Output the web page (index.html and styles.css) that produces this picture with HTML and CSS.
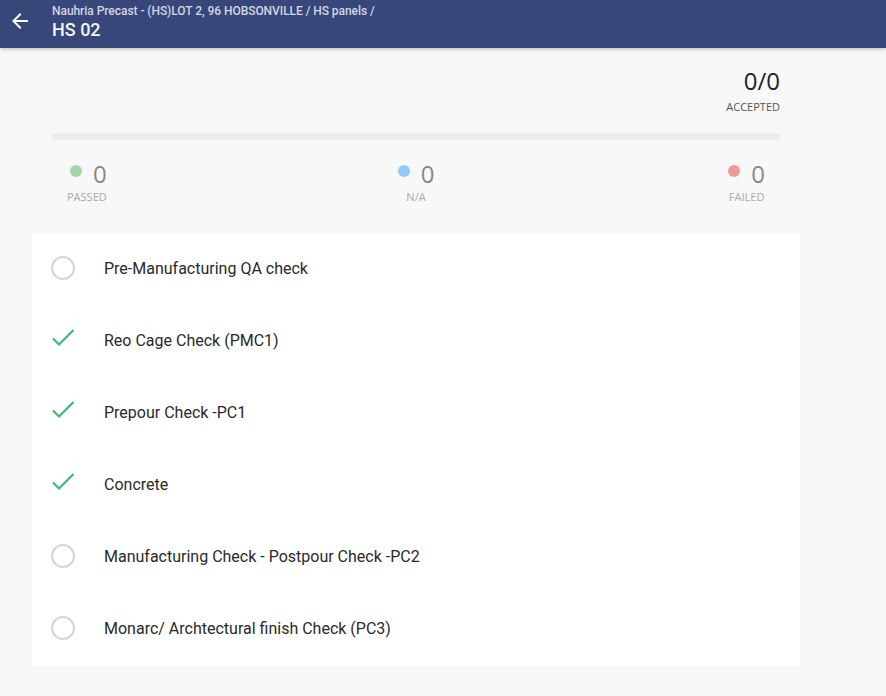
FILE: index.html
```html
<!DOCTYPE html>
<html lang="en">
<head>
<meta charset="utf-8">
<title>HS 02</title>
<link rel="stylesheet" href="styles.css">
</head>
<body>
<header class="topbar">
  <button class="back" aria-label="Back">
    <svg width="24" height="24" viewBox="0 0 24 24"><path d="M20 11H7.83l5.59-5.59L12 4l-8 8 8 8 1.41-1.41L7.83 13H20v-2z" fill="#ffffff"/></svg>
  </button>
  <div class="titles">
    <div class="crumb">Nauhria Precast - (HS)LOT 2, 96 HOBSONVILLE / HS panels /</div>
    <div class="title">HS 02</div>
  </div>
</header>
<main class="page">
  <section class="summary">
    <div class="accepted">
      <div class="big">0/0</div>
      <div class="label">ACCEPTED</div>
    </div>
    <div class="bar"></div>
    <div class="stats">
      <div class="stat start">
        <div class="stat-row"><span class="dot green"></span><span class="num">0</span></div>
        <div class="label light">PASSED</div>
      </div>
      <div class="stat center">
        <div class="stat-row"><span class="dot blue"></span><span class="num">0</span></div>
        <div class="label light">N/A</div>
      </div>
      <div class="stat end">
        <div class="stat-row"><span class="dot red"></span><span class="num">0</span></div>
        <div class="label light">FAILED</div>
      </div>
    </div>
  </section>
  <ul class="list">
    <li class="item"><span class="icon"><svg width="24" height="24" viewBox="0 0 24 24"><circle cx="12" cy="12" r="11" fill="none" stroke="#d6d6d6" stroke-width="2"/></svg></span><span class="text">Pre-Manufacturing QA check</span></li>
    <li class="item"><span class="icon"><svg width="24" height="24" viewBox="0 0 24 24"><polyline points="2,10.5 8,16.5 22.5,2" fill="none" stroke="#3dba6f" stroke-width="2.2"/></svg></span><span class="text">Reo Cage Check (PMC1)</span></li>
    <li class="item"><span class="icon"><svg width="24" height="24" viewBox="0 0 24 24"><polyline points="2,10.5 8,16.5 22.5,2" fill="none" stroke="#3dba6f" stroke-width="2.2"/></svg></span><span class="text">Prepour Check -PC1</span></li>
    <li class="item"><span class="icon"><svg width="24" height="24" viewBox="0 0 24 24"><polyline points="2,10.5 8,16.5 22.5,2" fill="none" stroke="#3dba6f" stroke-width="2.2"/></svg></span><span class="text">Concrete</span></li>
    <li class="item"><span class="icon"><svg width="24" height="24" viewBox="0 0 24 24"><circle cx="12" cy="12" r="11" fill="none" stroke="#d6d6d6" stroke-width="2"/></svg></span><span class="text">Manufacturing Check - Postpour Check -PC2</span></li>
    <li class="item"><span class="icon"><svg width="24" height="24" viewBox="0 0 24 24"><circle cx="12" cy="12" r="11" fill="none" stroke="#d6d6d6" stroke-width="2"/></svg></span><span class="text">Monarc/ Archtectural finish Check (PC3)</span></li>
  </ul>
</main>
</body>
</html>
```

FILE: styles.css
```css
* { box-sizing: border-box; }
html, body { margin: 0; padding: 0; }
body {
  background: #f8f8f8;
  font-family: Roboto, "Liberation Sans", sans-serif;
  width: 886px;
  height: 696px;
  overflow: hidden;
}
.topbar {
  height: 48px;
  background: #37477a;
  display: flex;
  align-items: flex-start;
  padding-left: 8px;
  box-shadow: 0 1px 4px rgba(0,0,0,0.25);
  position: relative;
}
.back {
  background: none;
  border: 0;
  padding: 0;
  width: 24px;
  height: 24px;
  margin-top: 9px;
  margin-right: 20px;
  display: flex;
}
.titles { padding-top: 3px; }
.crumb {
  font-size: 12px;
  line-height: 16px;
  font-weight: 500;
  color: #d2d6e2;
  letter-spacing: -0.05px;
}
.title {
  font-size: 18px;
  line-height: 21px;
  font-weight: 500;
  color: #f4f4f6;
}
.page {
  margin-left: 32px;
  width: 768px;
}
.summary {
  padding: 17px 20px 0;
  font-family: "Open Sans", sans-serif;
}
.accepted {
  display: flex;
  flex-direction: column;
  align-items: flex-end;
}
.big {
  font-size: 24px;
  line-height: 32px;
  color: #222;
}
.label {
  font-size: 11px;
  line-height: 16px;
  color: #555;
  margin-top: 2px;
}
.label.light { color: #a8a8a8; margin-top: 1px; }
.bar {
  height: 7px;
  border-radius: 4px;
  background: #ececec;
  margin-top: 18px;
}
.stats {
  display: grid;
  grid-template-columns: 1fr 1fr 1fr;
  padding: 0 15px;
  margin-top: 20px;
}
.stat {
  display: flex;
  flex-direction: column;
  align-items: center;
}
.stat.start { justify-self: start; align-items: flex-end; }
.stat.center { justify-self: center; }
.stat.end { justify-self: end; }
.stat-row {
  display: flex;
  align-items: flex-start;
  gap: 11px;
}
.dot {
  width: 12px;
  height: 12px;
  border-radius: 50%;
  margin-top: 5px;
}
.dot.green { background: #a5d6a7; }
.dot.blue { background: #90caf9; }
.dot.red { background: #ef9a9a; }
.num {
  font-size: 24px;
  line-height: 28px;
  color: #888;
}
.list {
  list-style: none;
  margin: 28px 0 0;
  padding: 0;
  background: #fff;
}
.item {
  height: 72px;
  display: flex;
  align-items: center;
  padding-left: 19px;
  padding-bottom: 2px;
}
.icon {
  width: 24px;
  height: 24px;
  display: flex;
  margin-right: 29px;
}
.text {
  font-size: 16px;
  color: #2a2a2a;
}
```
